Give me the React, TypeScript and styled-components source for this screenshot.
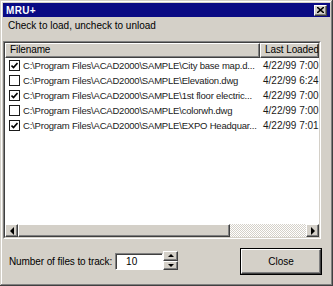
import React from "react";
import styled, { createGlobalStyle } from "styled-components";

const FACE = "#d4d0c8";
const SHADOW = "#808080";
const DARK = "#404040";

const GlobalStyle = createGlobalStyle`
  html, body {
    margin: 0;
    padding: 0;
    background: ${FACE};
  }
  * {
    box-sizing: border-box;
  }
`;

const Window = styled.div`
  width: 333px;
  height: 286px;
  display: flex;
  flex-direction: column;
  padding: 3px;
  background: ${FACE};
  font-family: "Liberation Sans", Arial, sans-serif;
  font-size: 10px;
  color: #000;
  box-shadow: inset -1px -1px 0 ${DARK}, inset 1px 1px 0 ${FACE},
    inset -2px -2px 0 ${SHADOW}, inset 2px 2px 0 #fff;
`;

const TitleBar = styled.div`
  height: 14px;
  display: flex;
  align-items: center;
  justify-content: space-between;
  padding: 0 3px;
  background: #0a0a84;
`;

const TitleText = styled.span`
  color: #fff;
  font-weight: bold;
  font-size: 10px;
  letter-spacing: 0.3px;
`;

const raised = `
  background: ${FACE};
  border-style: solid;
  border-width: 1px;
  border-color: #fff ${DARK} ${DARK} #fff;
  box-shadow: inset -1px -1px 0 ${SHADOW};
`;

const TitleClose = styled.div`
  ${raised};
  width: 13px;
  height: 11px;
  display: flex;
  align-items: center;
  justify-content: center;
`;

const Subtitle = styled.div`
  height: 24px;
  padding: 3px 5px 0;
  line-height: 12px;
`;

const ListBox = styled.div`
  height: 198px;
  margin-right: 9px;
  border-style: solid;
  border-width: 1px;
  border-color: ${SHADOW} #fff #fff ${SHADOW};
`;

const ListInner = styled.div`
  height: 100%;
  display: flex;
  flex-direction: column;
  overflow: hidden;
  background: #fff;
  border-style: solid;
  border-width: 1px;
  border-color: ${DARK} ${FACE} ${FACE} ${DARK};
`;

const Header = styled.div`
  display: flex;
  height: 15px;
  flex-shrink: 0;
`;

const HeaderCell = styled.div<{ $width?: number }>`
  ${raised};
  ${(p) => (p.$width ? `width: ${p.$width}px;` : "flex: 1;")}
  flex-shrink: 0;
  padding-left: 4px;
  line-height: 12px;
  white-space: nowrap;
  overflow: hidden;
  letter-spacing: -0.1px;
`;

const Rows = styled.div`
  flex: 1;
`;

const Row = styled.div`
  display: flex;
  align-items: center;
  height: 15px;
  color: #1a1a1a;
`;

const NameCell = styled.div`
  width: 255px;
  flex-shrink: 0;
  display: flex;
  align-items: center;
  padding-left: 4px;
  white-space: nowrap;
  overflow: hidden;
`;

const NameText = styled.span`
  font-size: 9.5px;
  letter-spacing: -0.2px;
`;

const DateCell = styled.div`
  flex: 1;
  padding-left: 3px;
  white-space: nowrap;
  overflow: hidden;
`;

const Check = styled.span`
  width: 11px;
  height: 11px;
  flex-shrink: 0;
  margin-right: 3px;
  background: #fff;
  border: 1px solid #1a1a1a;
  display: flex;
  align-items: center;
  justify-content: center;
`;

const ScrollBar = styled.div`
  display: flex;
  height: 13px;
  flex-shrink: 0;
`;

const ArrowButton = styled.div`
  ${raised};
  width: 13px;
  height: 13px;
  display: flex;
  align-items: center;
  justify-content: center;
`;

const Thumb = styled.div`
  ${raised};
  width: 212px;
  height: 13px;
`;

const Track = styled.div`
  flex: 1;
  background: repeating-conic-gradient(#fff 0 25%, ${FACE} 0 50%) 0 0 / 2px 2px;
`;

const Footer = styled.div`
  flex: 1;
  display: flex;
  align-items: center;
  padding: 1px 8px 0 6px;
`;

const Label = styled.span`
  white-space: nowrap;
  letter-spacing: -0.1px;
`;

const NumberInput = styled.div`
  width: 48px;
  height: 17px;
  margin-left: 3px;
  background: #fff;
  border-style: solid;
  border-width: 1px;
  border-color: ${SHADOW} #fff #fff ${SHADOW};
  box-shadow: inset 1px 1px 0 ${DARK};
  padding-left: 10px;
  line-height: 15px;
`;

const Spin = styled.div`
  display: flex;
  flex-direction: column;
  width: 15px;
  height: 19px;
  margin-top: -2px;
`;

const SpinButton = styled.div`
  ${raised};
  flex: 1;
  display: flex;
  align-items: center;
  justify-content: center;
`;

const CloseButton = styled.div`
  margin-left: auto;
  width: 82px;
  height: 27px;
  border: 1px solid #000;
  display: flex;
`;

const CloseFace = styled.div`
  ${raised};
  flex: 1;
  display: flex;
  align-items: center;
  justify-content: center;
  font-size: 10px;
`;

const Tri: React.FC<{ dir: "left" | "right" | "up" | "down" }> = ({ dir }) => {
  const pts = {
    left: "4,0 4,8 0,4",
    right: "0,0 0,8 4,4",
    up: "0,3 6,3 3,0",
    down: "0,0 6,0 3,3",
  }[dir];
  const horiz = dir === "left" || dir === "right";
  return (
    <svg width={horiz ? 4 : 6} height={horiz ? 8 : 3}>
      <polygon points={pts} fill="#000" />
    </svg>
  );
};

const files = [
  { name: "C:\\Program Files\\ACAD2000\\SAMPLE\\City base map.d...", date: "4/22/99 7:00", on: true },
  { name: "C:\\Program Files\\ACAD2000\\SAMPLE\\Elevation.dwg", date: "4/22/99 6:24", on: false },
  { name: "C:\\Program Files\\ACAD2000\\SAMPLE\\1st floor electric...", date: "4/22/99 7:00", on: true },
  { name: "C:\\Program Files\\ACAD2000\\SAMPLE\\colorwh.dwg", date: "4/22/99 7:00", on: false },
  { name: "C:\\Program Files\\ACAD2000\\SAMPLE\\EXPO Headquar...", date: "4/22/99 7:01", on: true },
];

const App: React.FC = () => {
  return (
    <>
      <GlobalStyle />
      <Window>
        <TitleBar>
          <TitleText>MRU+</TitleText>
          <TitleClose>
            <svg width="7" height="6" viewBox="0 0 7 6">
              <path d="M0 0 L7 6 M7 0 L0 6" stroke="#000" strokeWidth="1.6" />
            </svg>
          </TitleClose>
        </TitleBar>
        <Subtitle>Check to load, uncheck to unload</Subtitle>
        <ListBox>
          <ListInner>
            <Header>
              <HeaderCell $width={255}>Filename</HeaderCell>
              <HeaderCell>Last Loaded</HeaderCell>
            </Header>
            <Rows>
              {files.map((f) => (
                <Row key={f.name}>
                  <NameCell>
                    <Check>
                      {f.on && (
                        <svg width="7" height="7" viewBox="0 0 7 7">
                          <path d="M0.5 3.5 L2.5 5.5 L6.5 1" stroke="#000" strokeWidth="1.6" fill="none" />
                        </svg>
                      )}
                    </Check>
                    <NameText>{f.name}</NameText>
                  </NameCell>
                  <DateCell>{f.date}</DateCell>
                </Row>
              ))}
            </Rows>
            <ScrollBar>
              <ArrowButton>
                <Tri dir="left" />
              </ArrowButton>
              <Thumb />
              <Track />
              <ArrowButton>
                <Tri dir="right" />
              </ArrowButton>
            </ScrollBar>
          </ListInner>
        </ListBox>
        <Footer>
          <Label>Number of files to track:</Label>
          <NumberInput>10</NumberInput>
          <Spin>
            <SpinButton>
              <Tri dir="up" />
            </SpinButton>
            <SpinButton>
              <Tri dir="down" />
            </SpinButton>
          </Spin>
          <CloseButton>
            <CloseFace>Close</CloseFace>
          </CloseButton>
        </Footer>
      </Window>
    </>
  );
};

export default App;
